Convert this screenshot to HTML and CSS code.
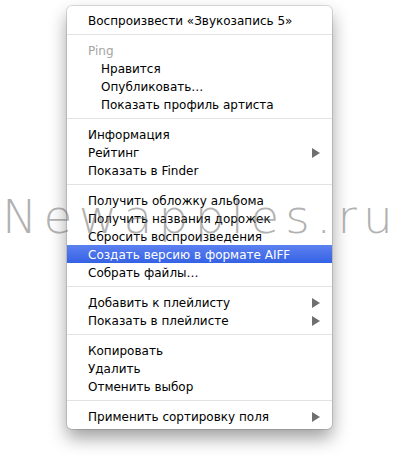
FILE: index.html
```html
<!DOCTYPE html>
<html lang="ru">
<head>
<meta charset="utf-8">
<link rel="stylesheet" href="styles.css">
</head>
<body>
<div class="stage">
  <div class="menu">
    <div class="item">Воспроизвести «Звукозапись 5»</div>
    <div class="sep"></div>
    <div class="item disabled">Ping</div>
    <div class="item indent">Нравится</div>
    <div class="item indent">Опубликовать…</div>
    <div class="item indent">Показать профиль артиста</div>
    <div class="sep"></div>
    <div class="item">Информация</div>
    <div class="item">Рейтинг<span class="arrow"></span></div>
    <div class="item">Показать в Finder</div>
    <div class="sep"></div>
    <div class="item">Получить обложку альбома</div>
    <div class="item">Получить названия дорожек</div>
    <div class="item">Сбросить воспроизведения</div>
    <div class="item selected">Создать версию в формате AIFF</div>
    <div class="item">Собрать файлы…</div>
    <div class="sep"></div>
    <div class="item">Добавить к плейлисту<span class="arrow"></span></div>
    <div class="item">Показать в плейлисте<span class="arrow"></span></div>
    <div class="sep"></div>
    <div class="item">Копировать</div>
    <div class="item">Удалить</div>
    <div class="item">Отменить выбор</div>
    <div class="sep"></div>
    <div class="item">Применить сортировку поля<span class="arrow"></span></div>
  </div>
  <div class="watermark">Newapples.r<span class="last">u</span></div>
</div>
</body>
</html>
```

FILE: styles.css
```css
html, body {
  margin: 0;
  padding: 0;
  background: #ffffff;
}
.stage {
  position: relative;
  width: 400px;
  height: 456px;
  overflow: hidden;
  padding-top: 6px;
  box-sizing: border-box;
}
.menu {
  margin-left: 67px;
  width: 265px;
  box-sizing: border-box;
  padding: 5px 0 4px;
  background: #ffffff;
  border-radius: 5px;
  box-shadow: 0 0 0 1px rgba(0, 0, 0, 0.12), 0 9px 18px rgba(0, 0, 0, 0.38);
  font-family: "DejaVu Sans", "Liberation Sans", sans-serif;
  font-size: 12px;
  color: #000000;
}
.item {
  display: flex;
  align-items: center;
  justify-content: space-between;
  box-sizing: border-box;
  height: 18px;
  padding: 1px 12px 0 21px;
  white-space: nowrap;
}
.item.indent {
  padding-left: 34px;
}
.item.disabled {
  color: #a4a4a4;
}
.item.selected {
  background: linear-gradient(#5c80ef, #3562e5);
  color: #ffffff;
}
.arrow {
  width: 0;
  height: 0;
  border-left: 8px solid #6f6f6f;
  border-top: 5px solid transparent;
  border-bottom: 5px solid transparent;
}
.sep {
  height: 1px;
  margin: 5px 0 6px;
  background: #e2e2e2;
}
.watermark {
  position: absolute;
  left: 2px;
  top: 189px;
  font-family: "DejaVu Sans", sans-serif;
  font-weight: 200;
  font-size: 47px;
  letter-spacing: 6.3px;
  color: rgba(100, 100, 100, 0.5);
  pointer-events: none;
  white-space: nowrap;
}
.watermark .last {
  letter-spacing: 0;
}
```
